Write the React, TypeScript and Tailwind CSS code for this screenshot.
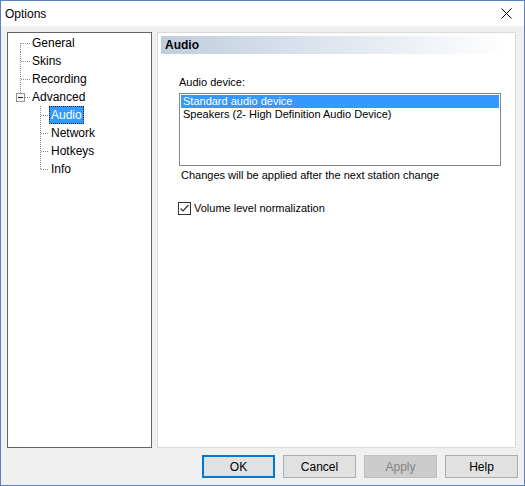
import React from "react";

const LINE = "#8c8c8c";

function Conn1({ top, bottom, box }: { top: boolean; bottom: boolean; box?: boolean }) {
  return (
    <svg width="22" height="18" className="shrink-0" shapeRendering="crispEdges">
      {box ? (
        <>
          {top && <line x1="12.5" y1="0" x2="12.5" y2="5" stroke={LINE} strokeDasharray="1 1" />}
          <line x1="17" y1="9.5" x2="22" y2="9.5" stroke={LINE} strokeDasharray="1 1" />
          <rect x="8.5" y="5.5" width="8" height="8" fill="#f7f7f7" stroke="#919191" />
          <line x1="10" y1="9.5" x2="15" y2="9.5" stroke="#1a1a1a" />
        </>
      ) : (
        <>
          <line x1="12.5" y1={top ? 0 : 9} x2="12.5" y2={bottom ? 18 : 10} stroke={LINE} strokeDasharray="1 1" />
          <line x1="13" y1="9.5" x2="22" y2="9.5" stroke={LINE} strokeDasharray="1 1" />
        </>
      )}
    </svg>
  );
}

function Conn2({ bottom }: { bottom: boolean }) {
  return (
    <svg width="41" height="18" className="shrink-0" shapeRendering="crispEdges">
      <line x1="32.5" y1="0" x2="32.5" y2={bottom ? 18 : 10} stroke={LINE} strokeDasharray="1 1" />
      <line x1="33" y1="9.5" x2="41" y2="9.5" stroke={LINE} strokeDasharray="1 1" />
    </svg>
  );
}

function Btn({ label, primary, disabled }: { label: string; primary?: boolean; disabled?: boolean }) {
  const cls = primary
    ? "border-2 border-[#0078d7] bg-[#e1e1e1] text-black"
    : disabled
    ? "border border-[#bfbfbf] bg-[#cccccc] text-[#838383]"
    : "border border-[#adadad] bg-[#e1e1e1] text-black";
  return (
    <div className={`w-[73px] h-[23px] flex items-center justify-center text-[12px] ${cls}`}>
      {label}
    </div>
  );
}

export default function App() {
  return (
    <div
      className="w-[525px] h-[486px] border border-[#5b80c4] bg-[#f0f0f0] flex flex-col overflow-hidden"
      style={{ fontFamily: '"Liberation Sans", Arial, sans-serif' }}
    >
      {/* title bar */}
      <div className="h-[25px] bg-white flex items-center justify-between pl-[4px] pr-[12px] shrink-0">
        <span className="text-[12px] text-black leading-none">Options</span>
        <svg width="11" height="11" viewBox="0 0 11 11">
          <line x1="0.5" y1="0.5" x2="10.5" y2="10.5" stroke="#000" strokeWidth="1" />
          <line x1="10.5" y1="0.5" x2="0.5" y2="10.5" stroke="#000" strokeWidth="1" />
        </svg>
      </div>

      {/* body */}
      <div className="flex-1 flex flex-col pl-[6px] pr-[6px] pt-[6px]">
        <div className="flex gap-[5px] h-[416px]">
          {/* tree */}
          <div className="w-[145px] h-full border border-[#646464] bg-white pt-[1px] text-[12px] text-black">
            {[
              { t: "General", top: false, bottom: true },
              { t: "Skins", top: true, bottom: true },
              { t: "Recording", top: true, bottom: true },
            ].map((r) => (
              <div key={r.t} className="h-[18px] flex items-center">
                <Conn1 top={r.top} bottom={r.bottom} />
                <span className="px-[2px] leading-[18px]">{r.t}</span>
              </div>
            ))}
            <div className="h-[18px] flex items-center">
              <Conn1 top bottom={false} box />
              <span className="px-[2px] leading-[18px]">Advanced</span>
            </div>
            <div className="h-[18px] flex items-center">
              <Conn2 bottom />
              <span className="h-[18px] px-[1px] leading-[16px] bg-[#3399ff] text-white border border-dotted border-[#222]">
                Audio
              </span>
            </div>
            {["Network", "Hotkeys", "Info"].map((t, i) => (
              <div key={t} className="h-[18px] flex items-center">
                <Conn2 bottom={i < 2} />
                <span className="px-[2px] leading-[18px]">{t}</span>
              </div>
            ))}
          </div>

          {/* panel */}
          <div className="w-[359px] h-full border border-[#d9d9d9] bg-white flex flex-col">
            <div className="ml-[3px] mt-[3px] w-[347px] h-[18px] bg-gradient-to-r from-[#c1cedf] via-[#dfe6ef] to-white flex items-center pl-[4px]">
              <span className="text-[12px] font-bold text-black">Audio</span>
            </div>

            <div className="ml-[21px] mt-[22px] flex flex-col text-[11px] text-black">
              <div className="leading-[13px] h-[13px]">Audio device:</div>
              <div className="mt-[4px] w-[322px] h-[73px] border border-[#828790] bg-white p-[1px]">
                <div className="h-[13px] leading-[13px] bg-[#3399ff] text-white pl-[2px]">
                  Standard audio device
                </div>
                <div className="h-[13px] leading-[13px] pl-[2px]">
                  Speakers (2- High Definition Audio Device)
                </div>
              </div>
              <div className="ml-[2px] mt-[3px] leading-[13px] h-[13px]">
                Changes will be applied after the next station change
              </div>
              <div className="-ml-[1px] mt-[20px] flex items-center gap-[3px] h-[13px]">
                <div className="w-[13px] h-[13px] border border-[#333] bg-white flex items-center justify-center">
                  <svg width="11" height="11" viewBox="0 0 11 11">
                    <path d="M1.5 5.5 L4 8 L9.5 2" fill="none" stroke="#333" strokeWidth="1.2" />
                  </svg>
                </div>
                <span className="leading-[13px]">Volume level normalization</span>
              </div>
            </div>
          </div>
        </div>

        {/* buttons */}
        <div className="mt-[7px] flex justify-end gap-[8px]">
          <Btn label="OK" primary />
          <Btn label="Cancel" />
          <Btn label="Apply" disabled />
          <Btn label="Help" />
        </div>
      </div>
    </div>
  );
}
